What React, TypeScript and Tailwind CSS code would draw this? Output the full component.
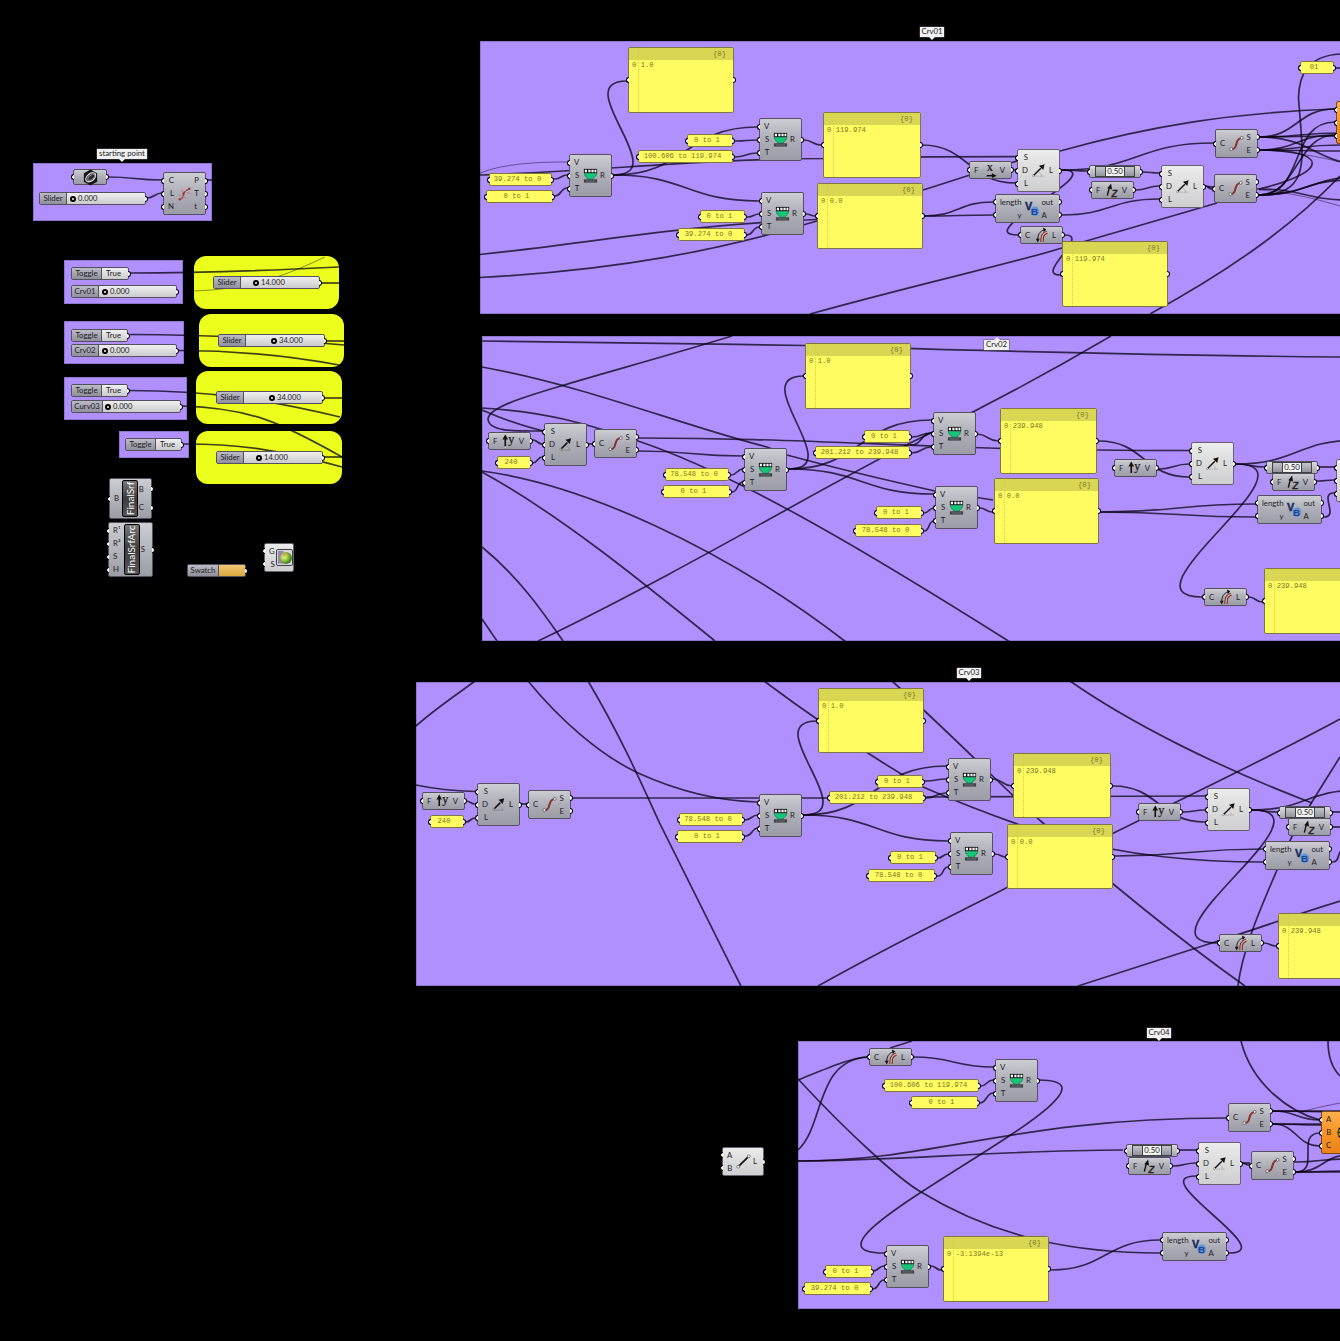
import type { ReactNode } from "react";
import clsx from "clsx";

type IconName = "bowl" | "arrow" | "arrowLight" | "curve" | "length" | "vb" | "x" | "y" | "z" | "points" | "line" | "ball" | "ring" | "arc";
type Tone = "gray" | "light" | "orange";

type NodeData = {
  x: number;
  y: number;
  w: number;
  h: number;
  ins?: string[];
  outs?: string[];
  icon?: IconName;
  tone?: Tone;
};

const bowl = (x: number, y: number): NodeData => ({ x, y, w: 43, h: 43, ins: ["V", "S", "T"], outs: ["R"], icon: "bowl" });
const sdl = (x: number, y: number, tone: Tone = "light"): NodeData => ({ x, y, w: 43, h: 43, ins: ["S", "D", "L"], outs: ["L"], icon: tone === "light" ? "arrowLight" : "arrow", tone });
const ends = (x: number, y: number): NodeData => ({ x, y, w: 43, h: 29, ins: ["C"], outs: ["S", "E"], icon: "curve" });
const unit = (x: number, y: number, icon: IconName): NodeData => ({ x, y, w: 43, h: 18, ins: ["F"], outs: ["V"], icon });
const len = (x: number, y: number): NodeData => ({ x, y, w: 43, h: 18, ins: ["C"], outs: ["L"], icon: "length" });
const vb = (x: number, y: number): NodeData => ({ x, y, w: 65, h: 29, ins: ["length", "y"], outs: ["out", "A"], icon: "vb" });

const nodes: NodeData[] = [
  { x: 73, y: 169, w: 34, h: 16, ins: [""], outs: [""], icon: "ring" },
  { x: 163, y: 172, w: 43, h: 43, ins: ["C", "L", "N"], outs: ["P", "T", "t"], icon: "points" },
  { x: 264, y: 543, w: 30, h: 29, ins: ["G", "S"], icon: "ball", tone: "light" },
  { x: 722, y: 1147, w: 42, h: 29, ins: ["A", "B"], outs: ["L"], icon: "line", tone: "light" },
  // Crv01
  bowl(569, 154), bowl(759, 118), bowl(761, 192),
  unit(969, 161, "x"), sdl(1017, 149), vb(995, 194), len(1020, 226),
  unit(1091, 181, "z"), sdl(1161, 165), ends(1215, 129), ends(1214, 174),
  { x: 1336, y: 101, w: 60, h: 43, ins: ["", "", ""], tone: "orange" },
  // Crv02
  unit(488, 432, "y"), sdl(544, 423, "gray"), ends(594, 429),
  bowl(744, 448), bowl(933, 412), bowl(935, 486),
  unit(1114, 459, "y"), sdl(1191, 442), unit(1272, 473, "z"), vb(1257, 495),
  { x: 1336, y: 459, w: 43, h: 43, ins: ["", "", ""], tone: "light" }, len(1204, 588),
  // Crv03
  unit(422, 792, "y"), sdl(477, 783, "gray"), ends(528, 790),
  bowl(759, 794), bowl(948, 758), bowl(950, 832),
  unit(1138, 803, "y"), sdl(1207, 788), unit(1288, 818, "z"), vb(1265, 841), len(1219, 934),
  // Crv04
  len(869, 1048), bowl(995, 1059), bowl(886, 1245),
  unit(1128, 1157, "z"), sdl(1198, 1142), ends(1228, 1103), ends(1251, 1151), vb(1162, 1232),
  { x: 1321, y: 1111, w: 43, h: 43, ins: ["A", "B", "C"], icon: "arc", tone: "orange" },
];

// x, y, w, h, text
const panels: [number, number, number, number, string][] = [
  [628, 47, 106, 66, "1.0"],
  [823, 112, 98, 66, "119.974"],
  [817, 183, 106, 66, "0.0"],
  [1062, 241, 106, 66, "119.974"],
  [805, 343, 106, 66, "1.0"],
  [1000, 408, 97, 66, "239.948"],
  [994, 478, 105, 66, "0.0"],
  [1264, 568, 106, 66, "239.948"],
  [818, 688, 106, 65, "1.0"],
  [1013, 753, 98, 65, "239.948"],
  [1007, 824, 106, 65, "0.0"],
  [1278, 913, 106, 66, "239.948"],
  [943, 1236, 106, 66, "-3.1394e-13"],
];

// x, y, w, text
const chips: [number, number, number, string][] = [
  [489, 173, 63, "39.274 to 0"], [486, 190, 67, "0 to 1"],
  [687, 134, 46, "0 to 1"], [638, 150, 95, "100.606 to 119.974"],
  [700, 210, 45, "0 to 1"], [678, 228, 67, "39.274 to 0"],
  [1300, 61, 34, "01"],
  [497, 456, 34, "240"], [665, 468, 64, "78.548 to 0"], [663, 485, 67, "0 to 1"],
  [864, 430, 46, "0 to 1"], [815, 446, 95, "201.212 to 239.948"],
  [876, 506, 46, "0 to 1"], [855, 524, 67, "78.548 to 0"],
  [430, 815, 34, "240"], [679, 813, 64, "78.548 to 0"], [677, 830, 66, "0 to 1"],
  [877, 775, 46, "0 to 1"], [829, 791, 95, "201.212 to 239.948"],
  [890, 851, 46, "0 to 1"], [868, 869, 67, "78.548 to 0"],
  [884, 1079, 95, "100.606 to 119.974"], [911, 1096, 67, "0 to 1"],
  [825, 1265, 47, "0 to 1"], [804, 1282, 67, "39.274 to 0"],
];

// x, y, w, name width, knob offset, name, value
const sliders: [number, number, number, number, number, string, string][] = [
  [39, 192, 107, 27, 34, "Slider", "0.000"],
  [71, 285, 106, 27, 34, "Crv01", "0.000"],
  [71, 344, 106, 27, 34, "Crv02", "0.000"],
  [71, 400, 110, 31, 37, "Curv03", "0.000"],
  [213, 276, 107, 27, 43, "Slider", "14.000"],
  [218, 334, 107, 27, 56, "Slider", "34.000"],
  [216, 391, 107, 27, 56, "Slider", "34.000"],
  [216, 451, 107, 27, 43, "Slider", "14.000"],
];

const toggles = [[71, 267, 58], [71, 329, 57], [71, 384, 57], [125, 438, 57]];

const factors = [[1089, 165], [1266, 461], [1279, 806], [1126, 1144]];

const groups = [
  [33, 163, 179, 58],
  [64, 260, 119, 44],
  [64, 321, 120, 43],
  [64, 377, 123, 43],
  [119, 431, 70, 27],
  [480, 41, 880, 273],
  [482, 336, 880, 305],
  [416, 682, 940, 304],
  [798, 1041, 560, 268],
];

const brightGroups = [
  [194, 256, 145, 53],
  [199, 314, 145, 53],
  [196, 371, 146, 53],
  [196, 431, 146, 53],
];

// x, y, w, text, direction of the pointer
const tags: [number, number, number, string, "down" | "up"][] = [
  [97, 149, 50, "starting point", "down"],
  [920, 27, 24, "Crv01", "down"],
  [984, 340, 25, "Crv02", "up"],
  [957, 668, 24, "Crv03", "down"],
  [1147, 1028, 24, "Crv04", "down"],
];

// port to port wires: x1, y1, x2, y2
const links = [
  [108, 177, 162, 180], [147, 198, 162, 193], [207, 180, 213, 180],
  [322, 283, 339, 283], [327, 341, 344, 341], [325, 398, 342, 398], [325, 457, 342, 457],
  [614, 175, 627, 81], [614, 175, 757, 127], [614, 175, 759, 201],
  [555, 179, 567, 175], [555, 196, 567, 188], [736, 141, 757, 140], [735, 157, 757, 153],
  [748, 217, 759, 214], [747, 235, 759, 227], [804, 140, 821, 145], [806, 214, 815, 216],
  [922, 145, 1015, 183], [1013, 170, 1015, 170], [924, 216, 993, 202], [924, 216, 993, 215],
  [1062, 170, 1087, 171], [1062, 170, 1213, 143], [1062, 170, 1018, 235], [1065, 235, 1060, 275],
  [1143, 172, 1159, 173], [1136, 190, 1159, 186], [1062, 215, 1159, 199], [1205, 186, 1212, 189],
  [1205, 186, 1212, 187],
  [1259, 137, 1335, 109], [1259, 137, 1340, 133], [1259, 137, 1340, 136], [1259, 137, 1370, 165],
  [1259, 150, 1335, 135], [1259, 150, 1340, 151], [1259, 150, 1340, 145], [1259, 195, 1335, 122],
  [1259, 195, 1335, 135], [1259, 195, 1360, 177], [1259, 195, 1350, 180], [1259, 189, 1350, 200],
  [1336, 68, 1344, 68],
  [533, 440, 542, 444], [533, 463, 542, 457], [589, 444, 592, 444], [639, 451, 743, 456],
  [731, 475, 743, 469], [732, 492, 743, 482], [789, 469, 804, 376], [789, 469, 931, 420],
  [789, 469, 934, 494], [912, 437, 931, 433], [912, 453, 931, 447], [912, 445, 931, 433],
  [924, 513, 934, 508], [924, 531, 934, 521], [977, 434, 998, 441], [980, 508, 992, 512],
  [1099, 441, 1189, 477], [1159, 469, 1189, 464], [1102, 512, 1255, 504], [1102, 512, 1255, 517],
  [1236, 464, 1264, 467], [1236, 464, 1358, 440], [1236, 464, 1202, 597], [1249, 597, 1262, 602],
  [1321, 467, 1334, 467], [1318, 481, 1334, 480], [1324, 517, 1334, 493],
  [466, 801, 475, 804], [466, 822, 475, 818], [522, 804, 526, 804], [573, 798, 829, 798],
  [923, 797, 1205, 796], [745, 820, 758, 815], [746, 836, 758, 828], [804, 815, 817, 721],
  [804, 815, 946, 766], [804, 815, 948, 841], [926, 781, 946, 779], [926, 798, 946, 793],
  [938, 858, 948, 854], [938, 876, 948, 867], [993, 779, 1012, 786], [995, 854, 1006, 857],
  [1113, 786, 1205, 822], [1183, 812, 1205, 810], [1115, 856, 1263, 849], [1252, 810, 1277, 812],
  [1252, 810, 1360, 790], [1252, 810, 1217, 943], [1264, 943, 1276, 946], [1334, 812, 1344, 812],
  [1333, 827, 1344, 827], [1333, 862, 1344, 850],
  [914, 1057, 993, 1067], [981, 1086, 993, 1080], [980, 1103, 993, 1093], [1039, 1080, 884, 1253],
  [873, 1271, 884, 1266], [873, 1289, 884, 1280], [931, 1266, 941, 1270], [1051, 1270, 1160, 1240],
  [1229, 1253, 1196, 1176], [1181, 1150, 1196, 1150], [1173, 1166, 1196, 1163], [1242, 1163, 1249, 1165],
  [1242, 1163, 1249, 1163], [1273, 1111, 1344, 1112], [1273, 1111, 1344, 1111], [1273, 1111, 1320, 1120],
  [1273, 1124, 1320, 1125], [1273, 1124, 1320, 1124], [1273, 1124, 1320, 1146], [1296, 1162, 1344, 1159],
  [1296, 1172, 1320, 1133], [1296, 1172, 1344, 1172], [1296, 1172, 1344, 1171], [1296, 1172, 1350, 1155],
];

// wires that run in from outside of their group
const longWires = [
  "M130 273C200 273 260 271 339 267",
  "M130 334.500C200 334.500 260 337 344 345",
  "M179 350.500C240 350.500 290 356 339 365",
  "M129 390.500C210 390.500 270 400 340 417",
  "M182 406C250 408 280 422 342 457",
  "M184 444C240 444 280 450 342 467",
  "M480 175C600 171 700 159 823 158.500C880 157 960 156.700 1016 156.700",
  "M480 254.500C600 242 680 225 817 219.500",
  "M480 277.500C620 270 720 250 817 221",
  "M923 190C980 172 1000 164 1060 151C1150 126 1230 113 1335 109",
  "M810 314C930 281 1010 264 1062 248L1217 203",
  "M1150 314C1230 270 1290 228 1340 176",
  "M1259 150C1330 150 1330 172 1259 189",
  "M1259 195C1312 194 1303 160 1298.500 98C1299 74 1308 56 1340 54",
  "M482 341C600 342 700 344 805 345.500C900 348 1100 355 1340 357",
  "M732 336C660 358 600 374 561 386C520 398 489 408 488 419C489 432 515 431 543 431",
  "M482 367C590 387 680 425 767 447L787 455C850 472 890 481 935 491L993 500",
  "M482 408C550 412 590 425 638 441C740 475 880 560 1010 642",
  "M482 410C500 418 520 425 543 431",
  "M639 438C740 438 800 441 933 446C1000 449 1100 450.500 1189 450.500",
  "M538 641C700 563 850 470 933 432C1000 399 1060 366 1111 336",
  "M482 471C580 484 720 545 846 642",
  "M482 472C560 515 640 580 715 641",
  "M482 547C520 578 545 615 563 641",
  "M482 619L497 641",
  "M416 726C435 709 455 696 475 681",
  "M528 681C560 720 600 755 638 773C680 792 720 801 757 802",
  "M588 681C620 735 640 780 660 824C690 885 715 935 741 986",
  "M416 785C435 789 455 791 475 791.500",
  "M764 681C800 708 860 750 923 787C960 803 1000 819 1050 835C1130 857 1200 862 1264 862",
  "M892 681C960 742 1010 795 1043 823C1100 875 1180 940 1245 986",
  "M1070 681C1130 723 1220 768 1312 803",
  "M818 986C900 940 960 912 1008 887C1060 858 1090 845 1138 821C1200 790 1270 757 1340 719",
  "M1078 986L1218 941C1260 928 1300 913 1340 901",
  "M1238 986C1242 950 1262 905 1277 870C1290 835 1310 805 1340 757",
  "M798 1080C830 1067 850 1058 868 1057",
  "M890 1048L912 1041",
  "M798 1150C825 1125 815 1060 868 1057",
  "M798 1079C850 1135 900 1180 921 1192C1000 1240 1080 1253 1160 1253",
  "M798 1161C940 1161 1010 1118 1227 1118",
  "M798 1161C900 1161 1000 1150 1123 1150",
  "M1241 1041C1252 1085 1290 1112 1320 1120",
  "M1328 1041C1328 1055 1332 1068 1340 1076",
];

const thinWires = [
  "M194 291C240 289 270 283 325 257",
  "M480 173C505 163 540 162 567 162",
  "M1259 150C1290 151 1320 157 1340 162",
  "M1259 190C1290 192 1320 200 1340 206",
  "M1300 1112C1315 1108 1330 1105 1340 1103",
];

function linkPath([x1, y1, x2, y2]: number[]) {
  const dx = x2 - x1;
  const dist = Math.hypot(dx, y2 - y1);
  const d = dx > 0 ? Math.max(dx / 2, Math.abs(y2 - y1) * 0.64) : Math.min(dist * 0.64, 120);
  return `M${x1 - 2} ${y1}H${x1}C${x1 + d} ${y1} ${x2 - d} ${y2} ${x2} ${y2}h1`;
}

const glyphs: Record<IconName, ReactNode> = {
  bowl: (
    <>
      <path d="M2 2h14v4.500H2z" fill="#111" />
      <path d="M3 3h2.300v2.600H3zM6.700 3H9v2.600H6.700zM10 3h2.300v2.600H10zM13.200 3h2v2.600h-2z" fill="#fff" />
      <path d="M2.500 6.500h13c0 3-2 4.600-3.500 5v1.500H6v-1.500C4.500 11 2.500 9.500 2.500 6.500z" fill="#12c878" stroke="#175a40" strokeWidth=".6" />
      <path d="M2 13h14v3.500H2z" fill="#3e4246" />
      <path d="M4 14.800h10" stroke="#858a8e" strokeWidth=".7" />
    </>
  ),
  arrow: (
    <>
      <path d="M3 15h11l-3-4" fill="none" stroke="#777" strokeWidth=".7" />
      <path d="M4 14l7-7" stroke="#111" strokeWidth="1.700" />
      <path d="M15 2.500l-1.500 6-4.500-4.500z" fill="#111" />
      <circle cx="4" cy="14" r="1" fill="#ddd" stroke="#555" strokeWidth=".5" />
    </>
  ),
  arrowLight: (
    <>
      <path d="M3 15h12M10 11c2 1 2 3 2 4" fill="none" stroke="#888" strokeWidth=".7" strokeDasharray="1.500 1" />
      <path d="M3.500 14.500l8-8" stroke="#111" strokeWidth="1.500" />
      <path d="M15.500 2.500l-1.500 6-4.500-4.500z" fill="#111" />
      <circle cx="3.500" cy="14.500" r="1" fill="#fff" stroke="#555" strokeWidth=".5" />
    </>
  ),
  curve: (
    <>
      <path d="M3.500 15c5 0 4.500-3 5.500-6s1-5 5.500-6" fill="none" stroke="#632020" strokeWidth="2" />
      <path d="M3.500 15c5 0 4.500-3 5.500-6s1-5 5.500-6" fill="none" stroke="#c23a32" strokeWidth=".9" />
      <circle cx="3.500" cy="15" r="1.500" fill="#fff" stroke="#333" strokeWidth=".7" />
      <circle cx="14.500" cy="3" r="1.500" fill="#fff" stroke="#333" strokeWidth=".7" />
    </>
  ),
  length: (
    <>
      <path d="M9.500 16c0-6 .5-9 5.500-10.500" fill="none" stroke="#6b1f1c" strokeWidth="3.400" />
      <path d="M9.500 16c0-6 .5-9 5.500-10.500" fill="none" stroke="#e8a99d" strokeWidth="1.400" />
      <path d="M5 14c0-6 2-9.500 7-11" fill="none" stroke="#111" strokeWidth="1" />
      <path d="M3 12.500h4L5 16.500zM10.500.500l3.500 2-2.500 3z" fill="#111" />
    </>
  ),
  vb: (
    <>
      <ellipse cx="12.500" cy="12" rx="4.500" ry="5" fill="#5e93dc" />
      <text x="2" y="10.500" fontSize="11.500" fontWeight="700" fontFamily="Liberation Sans, sans-serif" fill="#12285e" stroke="#12285e" strokeWidth=".4">V</text>
      <text x="8.500" y="15.500" fontSize="10.500" fontWeight="700" fontFamily="Liberation Sans, sans-serif" fill="#1d4690">B</text>
    </>
  ),
  x: (
    <>
      <text x="5" y="9.500" fontSize="13" fontFamily="Liberation Serif, serif" fill="#111" stroke="#111" strokeWidth=".2">x</text>
      <path d="M4 14.500h7" stroke="#111" strokeWidth="1.600" />
      <path d="M10.500 12l5 2.500-5 2.500z" fill="#111" />
      <circle cx="4" cy="14.500" r=".9" fill="#eee" stroke="#555" strokeWidth=".4" />
    </>
  ),
  y: (
    <>
      <path d="M4.500 14V6" stroke="#111" strokeWidth="1.700" />
      <path d="M1.500 7l3-5.500L7.500 7z" fill="#111" />
      <circle cx="4.500" cy="15" r=".9" fill="#eee" stroke="#555" strokeWidth=".4" />
      <text x="7.800" y="11" fontSize="13" fontFamily="Liberation Serif, serif" fill="#111" stroke="#111" strokeWidth=".2">y</text>
    </>
  ),
  z: (
    <>
      <path d="M3.500 14.500l2-8" stroke="#111" strokeWidth="1.500" />
      <path d="M7.500 1.500L8.500 8 3.500 6.500z" fill="#111" />
      <text x="8" y="15.500" fontSize="13" fontStyle="italic" fontFamily="Liberation Sans, sans-serif" fill="#222" stroke="#222" strokeWidth=".4">z</text>
    </>
  ),
  points: (
    <>
      <path d="M3 16c4-1 4-3 5-6s3-5 7-6" fill="none" stroke="#a33a35" strokeWidth="1.500" strokeDasharray="2.500 .8" />
      <path d="M3 10l2 2M6 5l2 3M8 12l3 2M12 8l3 1" stroke="#b5655f" strokeWidth=".7" />
      <path d="M3 14h2v2H3zM7 8h2v2H7zM13 3h2v2h-2z" fill="#9e2620" />
    </>
  ),
  line: (
    <>
      <path d="M3.500 14.500L14.500 3.500" stroke="#111" strokeWidth="1.800" />
      <circle cx="3.500" cy="14.500" r="1.500" fill="#fff" stroke="#444" strokeWidth=".7" />
      <circle cx="14.500" cy="3.500" r="1.500" fill="#fff" stroke="#444" strokeWidth=".7" />
    </>
  ),
  ball: (
    <>
      <defs>
        <radialGradient id="ball" cx=".35" cy=".4" r=".7">
          <stop offset="0" stopColor="#f6ff9a" />
          <stop offset=".5" stopColor="#86c532" />
          <stop offset="1" stopColor="#2e5b1c" />
        </radialGradient>
      </defs>
      <rect x=".5" y=".5" width="17" height="17" rx="1.500" fill="#d9d6de" stroke="#333" />
      <path d="M2 2h6v13.500H2z" fill="#9a86b0" />
      <circle cx="10.500" cy="9.500" r="6.300" fill="url(#ball)" />
      <path d="M6 6.500c1-2 4-3 6-2.300L9 9z" fill="#e98a5e" opacity=".6" />
    </>
  ),
  ring: (
    <>
      <path d="M9 .500l7 4v9l-7 4-7-4v-9z" fill="#17171a" />
      <ellipse cx="9.300" cy="9" rx="6" ry="3.800" transform="rotate(-40 9 9)" fill="#55555a" stroke="#f2f2f2" strokeWidth="1.100" />
      <ellipse cx="9.800" cy="9.500" rx="4.400" ry="2.200" transform="rotate(-40 9 9)" fill="#2b2b2e" stroke="#bbb" strokeWidth=".6" />
    </>
  ),
  arc: (
    <>
      <path d="M5 6c2-3 7-3 9 0M4 9h11M5 12.500c2 3 7 3 9 0" fill="none" stroke="#1c1c1c" strokeWidth="1.800" />
      <path d="M5 6l-1 3 1 3.500" fill="none" stroke="#2c5a2c" strokeWidth="1.400" />
    </>
  ),
};

function Icon({ name }: { name: IconName }) {
  return (
    <svg viewBox="0 0 18 18" className="size-[17px] shrink-0 overflow-visible">
      {glyphs[name]}
    </svg>
  );
}

function Port({ side }: { side: "left" | "right" }) {
  return (
    <span
      className={clsx(
        "absolute top-1/2 h-[6px] w-[3px] -translate-y-1/2 border border-black bg-white",
        side === "left" ? "right-full rounded-l-full border-r-0" : "left-full rounded-r-full border-l-0",
      )}
    />
  );
}

function Node({ x, y, w, h, ins = [], outs = [], icon, tone = "gray" }: NodeData) {
  return (
    <div
      className={clsx(
        "absolute flex items-center justify-between rounded-[2px] border bg-linear-to-b",
        tone === "gray" && "border-[#55505f] from-[#cdcdd3] via-[#adaeb7] to-[#9b9ca6]",
        tone === "light" && "border-[#66616c] from-[#ececec] via-[#dcdcdd] to-[#cfcfd1]",
        tone === "orange" && "border-[#7a4a10] from-[#ffb04a] via-[#f89424] to-[#e8821a]",
      )}
      style={{ left: x, top: y, width: w, height: h }}
    >
      <div className="flex flex-col text-right">
        {ins.map((label, i) => (
          <div key={i} className="relative h-[13px] pl-[4px] leading-[13px]">
            <Port side="left" />
            {label}
          </div>
        ))}
      </div>
      {icon && (
        <div
          className={clsx(
            "pointer-events-none absolute inset-0 flex items-center justify-center",
            icon === "vb" && "pl-[8px]",
            icon === "ball" && "pl-[10px]",
          )}
        >
          <Icon name={icon} />
        </div>
      )}
      <div className="flex flex-col">
        {outs.map((label, i) => (
          <div key={i} className="relative h-[13px] pr-[6px] leading-[13px]">
            <Port side="right" />
            {label}
          </div>
        ))}
      </div>
    </div>
  );
}

function Cluster({ x, y, w, h, name, ins, outs, wide }: { x: number; y: number; w: number; h: number; name: string; ins: string[]; outs: string[]; wide?: boolean }) {
  return (
    <div
      className="absolute flex items-stretch justify-between rounded-[2px] border border-[#55505f] bg-linear-to-b from-[#cdcdd3] to-[#9b9ca6] py-px"
      style={{ left: x, top: y, width: w, height: h }}
    >
      <div className="flex w-[12px] flex-col justify-around">
        {ins.map((label) => (
          <div key={label} className="relative pl-[4px] leading-[13px] whitespace-nowrap">
            <Port side="left" />
            {label}
          </div>
        ))}
      </div>
      <div className={clsx("flex w-[16px] items-center justify-center overflow-hidden rounded-[2px] border border-black bg-linear-to-b from-[#777] via-[#3c3c3c] to-[#555] text-white", wide && "ml-[3px]")}>
        <span className="-rotate-90 text-[10px] whitespace-nowrap">{name}</span>
      </div>
      <div className={clsx("flex flex-col", outs.length > 1 ? "justify-around" : "justify-center")}>
        {outs.map((label) => (
          <div key={label} className="relative pr-[7px] leading-[13px]">
            <Port side="right" />
            {label}
          </div>
        ))}
      </div>
    </div>
  );
}

export default function App() {
  return (
    <main className="relative h-[1341px] w-[1340px] overflow-hidden bg-black font-[Lato,sans-serif] text-[7.8px] text-[#1c1b22]">
      {groups.map(([x, y, w, h]) => (
        <div key={`${x}-${y}`} className="absolute border border-[#8d76cc] bg-[#b090ff]" style={{ left: x, top: y, width: w, height: h }} />
      ))}
      {brightGroups.map(([x, y, w, h]) => (
        <div key={`${x}-${y}`} className="absolute rounded-[12px] bg-[#ecff1c]" style={{ left: x, top: y, width: w, height: h }} />
      ))}

      {/* Wires */}
      <svg viewBox="0 0 1340 1341" className="absolute inset-0 h-full w-full" fill="none" stroke="#0a0010" strokeOpacity=".75">
        {links.map((link, i) => (
          <path key={i} d={linkPath(link)} strokeWidth="1.700" />
        ))}
        {longWires.map((d) => (
          <path key={d} d={d} strokeWidth="1.700" />
        ))}
        {thinWires.map((d) => (
          <path key={d} d={d} strokeWidth=".6" />
        ))}
      </svg>

      {tags.map(([x, y, w, text, dir]) => (
        <div key={text} className="absolute flex h-[10px] items-center justify-center bg-[#f1f1f1] leading-none whitespace-nowrap shadow-[0_0_0_.5px_#55505f]" style={{ left: x, top: y, width: w }}>
          {text}
          <span
            className={clsx(
              "absolute left-1/2 -translate-x-1/2 border-x-[3px] border-x-transparent",
              dir === "down" ? "top-full border-t-[3px] border-t-[#f1f1f1]" : "bottom-full border-b-[3px] border-b-[#f1f1f1]",
            )}
          />
        </div>
      ))}

      {nodes.map((node) => (
        <Node key={`${node.x}-${node.y}`} {...node} />
      ))}

      <Cluster x={109} y={478} w={43} h={41} name="FinalSrf" ins={["B"]} outs={["B", "C"]} />
      <Cluster x={108} y={522} w={45} h={55} name="FinalSrfArc" ins={["R¹", "R²", "S", "H"]} outs={["S"]} wide />

      {/* Number factors */}
      {factors.map(([x, y]) => (
        <div key={`${x}-${y}`} className="absolute flex h-[13px] w-[52px] items-stretch rounded-[2px] border border-[#55505f] bg-linear-to-b from-[#dcdce0] to-[#a5a6ae] px-[5px]" style={{ left: x, top: y }}>
          <div className="flex flex-1 justify-center border border-[#3f3f46] bg-linear-to-b from-[#c4c4ca] to-[#94959d]">
            <span className="w-[20px] border-x border-[#3f3f46] bg-[#f2f2f2] text-center leading-[9px]">0.50</span>
          </div>
          <Port side="left" />
          <Port side="right" />
        </div>
      ))}

      {/* Sliders */}
      {sliders.map(([x, y, w, nameWidth, knob, name, value]) => (
        <div key={`${x}-${y}`} className="absolute flex h-[13px] rounded-[2px] border border-[#55505f] bg-linear-to-b from-[#f0f0f0] to-[#cbcbcd] leading-[11px]" style={{ left: x, top: y, width: w }}>
          <span className="rounded-l-[1px] border-r border-[#55505f] bg-linear-to-b from-[#bcbcc6] to-[#8f909c] text-center" style={{ width: nameWidth }}>
            {name}
          </span>
          <span className="absolute inset-y-0 flex items-center gap-[2px] text-[7.6px]" style={{ left: knob - 4 }}>
            <i className="size-[6px] rounded-full border-2 border-black bg-white" />
            {value}
          </span>
          <Port side="right" />
        </div>
      ))}

      {/* Toggles */}
      {toggles.map(([x, y, w]) => (
        <div key={`${x}-${y}`} className="absolute flex h-[13px] rounded-[2px] border border-[#55505f] bg-linear-to-b from-[#f0f0f0] to-[#cbcbcd] leading-[11px]" style={{ left: x, top: y, width: w }}>
          <span className="w-[30px] rounded-l-[1px] border-r border-[#55505f] bg-linear-to-b from-[#bcbcc6] to-[#8f909c] text-center">Toggle</span>
          <span className="pl-[4px]">True</span>
          <Port side="right" />
        </div>
      ))}

      {/* Colour swatch */}
      <div className="absolute top-[564px] left-[187px] flex h-[13px] w-[59px] rounded-[2px] border border-[#55505f] bg-linear-to-b from-[#f0c973] to-[#dba93f] leading-[11px]">
        <span className="w-[31px] border-r border-[#55505f] bg-linear-to-b from-[#bcbcc6] to-[#8f909c] text-center">Swatch</span>
        <Port side="right" />
      </div>

      {/* Value panels */}
      {panels.map(([x, y, w, h, text]) => (
        <div key={`${x}-${y}`} className="absolute rounded-[2px] border border-[#7f7640] bg-[#fffc62] font-['Liberation_Mono',monospace] text-[7.2px] text-[#7d7826]" style={{ left: x, top: y, width: w, height: h }}>
          <div className="h-[12px] bg-[#d9d653] pr-[7px] text-right leading-[12px]">{x + w < 1340 && "{0}"}</div>
          <div className="absolute inset-y-0 left-[9px] border-l border-dotted border-[#d3cf4b]" />
          <div className="pl-[3px] leading-[11px] whitespace-pre">0 {text}</div>
          <Port side="left" />
          <Port side="right" />
        </div>
      ))}

      {chips.map(([x, y, w, text]) => (
        <div key={`${x}-${y}`} className="absolute h-[13px] rounded-[2px] border border-[#7f7640] bg-[#fffc62] pr-[6px] text-center font-['Liberation_Mono',monospace] text-[7.2px] leading-[11px] whitespace-nowrap text-[#7d7826]" style={{ left: x, top: y, width: w }}>
          {text}
          <Port side="left" />
          <Port side="right" />
        </div>
      ))}
    </main>
  );
}
